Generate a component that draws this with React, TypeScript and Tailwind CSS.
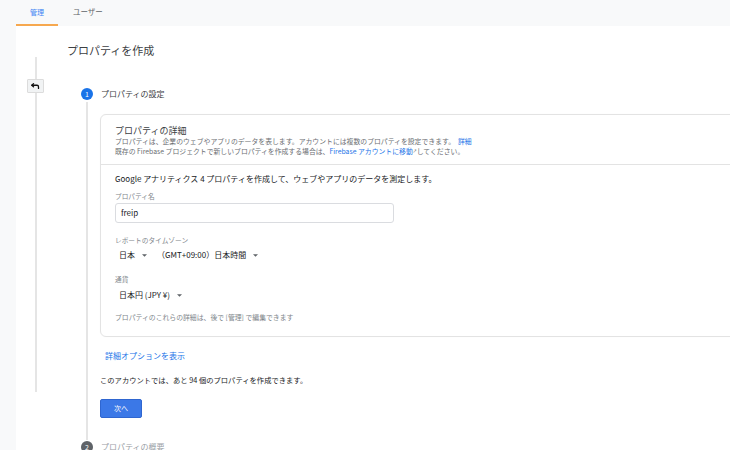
import React from 'react';

function Caret() {
  return (
    <svg width="5" height="3" viewBox="0 0 10 5" className="inline-block ml-[7px]">
      <path d="M0 0l5 5 5-5z" fill="#5f6368" />
    </svg>
  );
}

export default function App() {
  return (
    <div className="w-[730px] h-[450px] overflow-hidden bg-[#f8f9fa] flex flex-col font-['Noto_Sans_CJK_JP',sans-serif] text-[#202124]">
      {/* Tabs */}
      <div className="h-[26px] flex items-end pl-[16px] shrink-0">
        <div className="w-[42px] h-[26px] flex items-center justify-center text-[7px] text-[#4285f4] border-b-2 border-[#f6a84f] pt-[1px]">
          管理
        </div>
        <div className="h-[26px] flex items-center text-[7.5px] text-[#5f6368] ml-[15px] pb-[2px]">ユーザー</div>
      </div>

      <div className="flex flex-1 min-h-0">
        <div className="w-[16px] shrink-0" />
        <div className="flex-1 bg-white flex">
          {/* Back rail */}
          <div className="w-[51px] shrink-0">
            <div className="relative ml-[19px] mt-[31px] w-[2px] h-[335px] bg-[#e5e5e5]">
              <div className="absolute left-[-8px] top-[22px] w-[17px] h-[14px] bg-[#f1f3f4] border border-[#dcdcdc] rounded-[1px] flex items-center justify-center">
                <svg width="9" height="6" viewBox="0 0 18 12" fill="none" stroke="#111" strokeWidth="2.6" strokeLinecap="round" strokeLinejoin="round">
                  <path d="M5 1.5 1.5 4.5 5 7.5" />
                  <path d="M2 4.5h10a3 3 0 0 1 3 3V11" />
                </svg>
              </div>
            </div>
          </div>

          {/* Content */}
          <div className="flex-1 pt-[18px]">
            <h1 className="text-[11px] leading-[13px] text-[#3c4043] font-normal">プロパティを作成</h1>

            <div className="ml-[14px] mt-[31px]">
              {/* Step 1 */}
              <div className="flex items-center h-[12px]">
                <div className="w-[12px] h-[12px] rounded-full bg-[#1a73e8] text-white text-[7px] flex items-center justify-center leading-none">1</div>
                <span className="ml-[8px] text-[8px] text-[#3c4043]">プロパティの設定</span>
              </div>

              <div className="flex">
                <div className="w-[12px] flex justify-center shrink-0 pt-[2px]">
                  <div className="w-[2px] h-full bg-[#e5e5e5]" />
                </div>
                <div className="ml-[7px] pt-[14px] pb-[22px]">
                  {/* Card */}
                  <div className="w-[660px] rounded-[6px] border border-[#e3e3e3] shadow-[0_0_1px_rgba(0,0,0,0.06)]">
                    <div className="pl-[14px] pt-[9px] pb-[8px] border-b border-[#e3e3e3]">
                      <div className="text-[9px] leading-[13px] text-[#3c4043]">プロパティの詳細</div>
                      <div className="text-[6.85px] leading-[10px] text-[#6b6e72] mt-[-1px]">
                        プロパティは、企業のウェブやアプリのデータを表します。アカウントには複数のプロパティを設定できます。
                        <span className="text-[#1a73e8] ml-[3px]">詳細</span>
                      </div>
                      <div className="text-[6.85px] leading-[10px] text-[#6b6e72]">
                        既存の Firebase プロジェクトで新しいプロパティを作成する場合は、
                        <span className="text-[#1a73e8]">Firebase アカウントに移動</span>
                        <span className="text-[4px] align-top text-[#3c4043]">↗</span>
                        してください。
                      </div>
                    </div>
                    <div className="pl-[14px] pt-[9px] pb-[14px]">
                      <div className="text-[8px] leading-[10px] text-[#202124]">
                        Google アナリティクス 4 プロパティを作成して、ウェブやアプリのデータを測定します。
                      </div>
                      <div className="mt-[7px] text-[6.7px] leading-[10px] text-[#80868b]">プロパティ名</div>
                      <div className="mt-[2px] w-[279px] h-[20px] rounded-[3px] border border-[#dadce0] flex items-center pl-[5px] text-[8px] text-[#202124]">
                        freip
                      </div>
                      <div className="mt-[12px] text-[6.7px] leading-[10px] text-[#80868b]">レポートのタイムゾーン</div>
                      <div className="mt-[5px] flex items-center text-[8px] leading-[10px] text-[#202124] pl-[4px]">
                        <span className="flex items-center">日本<Caret /></span>
                        <span className="flex items-center ml-[10px]">（GMT+09:00）日本時間<Caret /></span>
                      </div>
                      <div className="mt-[14px] text-[6.7px] leading-[10px] text-[#80868b]">通貨</div>
                      <div className="mt-[6px] flex items-center text-[8px] leading-[10px] text-[#202124] pl-[4px]">
                        日本円 (JPY ¥)<Caret />
                      </div>
                      <div className="mt-[12px] text-[6.85px] leading-[10px] text-[#80868b]">
                        プロパティのこれらの詳細は、後で [管理] で編集できます
                      </div>
                    </div>
                  </div>

                  <div className="mt-[14px] ml-[5px] text-[8px] leading-[10px] text-[#1a73e8]">詳細オプションを表示</div>
                  <div className="mt-[14px] text-[7.3px] leading-[10px] text-[#202124]">
                    このアカウントでは、あと 94 個のプロパティを作成できます。
                  </div>
                  <button className="mt-[14px] w-[42px] h-[19px] rounded-[2px] bg-[#3b78e7] border border-[#2f66d0] text-white text-[7px] flex items-center justify-center">
                    次へ
                  </button>
                </div>
              </div>

              {/* Step 2 */}
              <div className="flex items-center h-[12px] mt-[1px]">
                <div className="w-[12px] h-[12px] rounded-full bg-[#5f6368] text-white text-[7px] flex items-center justify-center leading-none">2</div>
                <span className="ml-[8px] text-[8px] text-[#9aa0a6]">プロパティの概要</span>
              </div>
            </div>
          </div>
        </div>
      </div>
    </div>
  );
}
